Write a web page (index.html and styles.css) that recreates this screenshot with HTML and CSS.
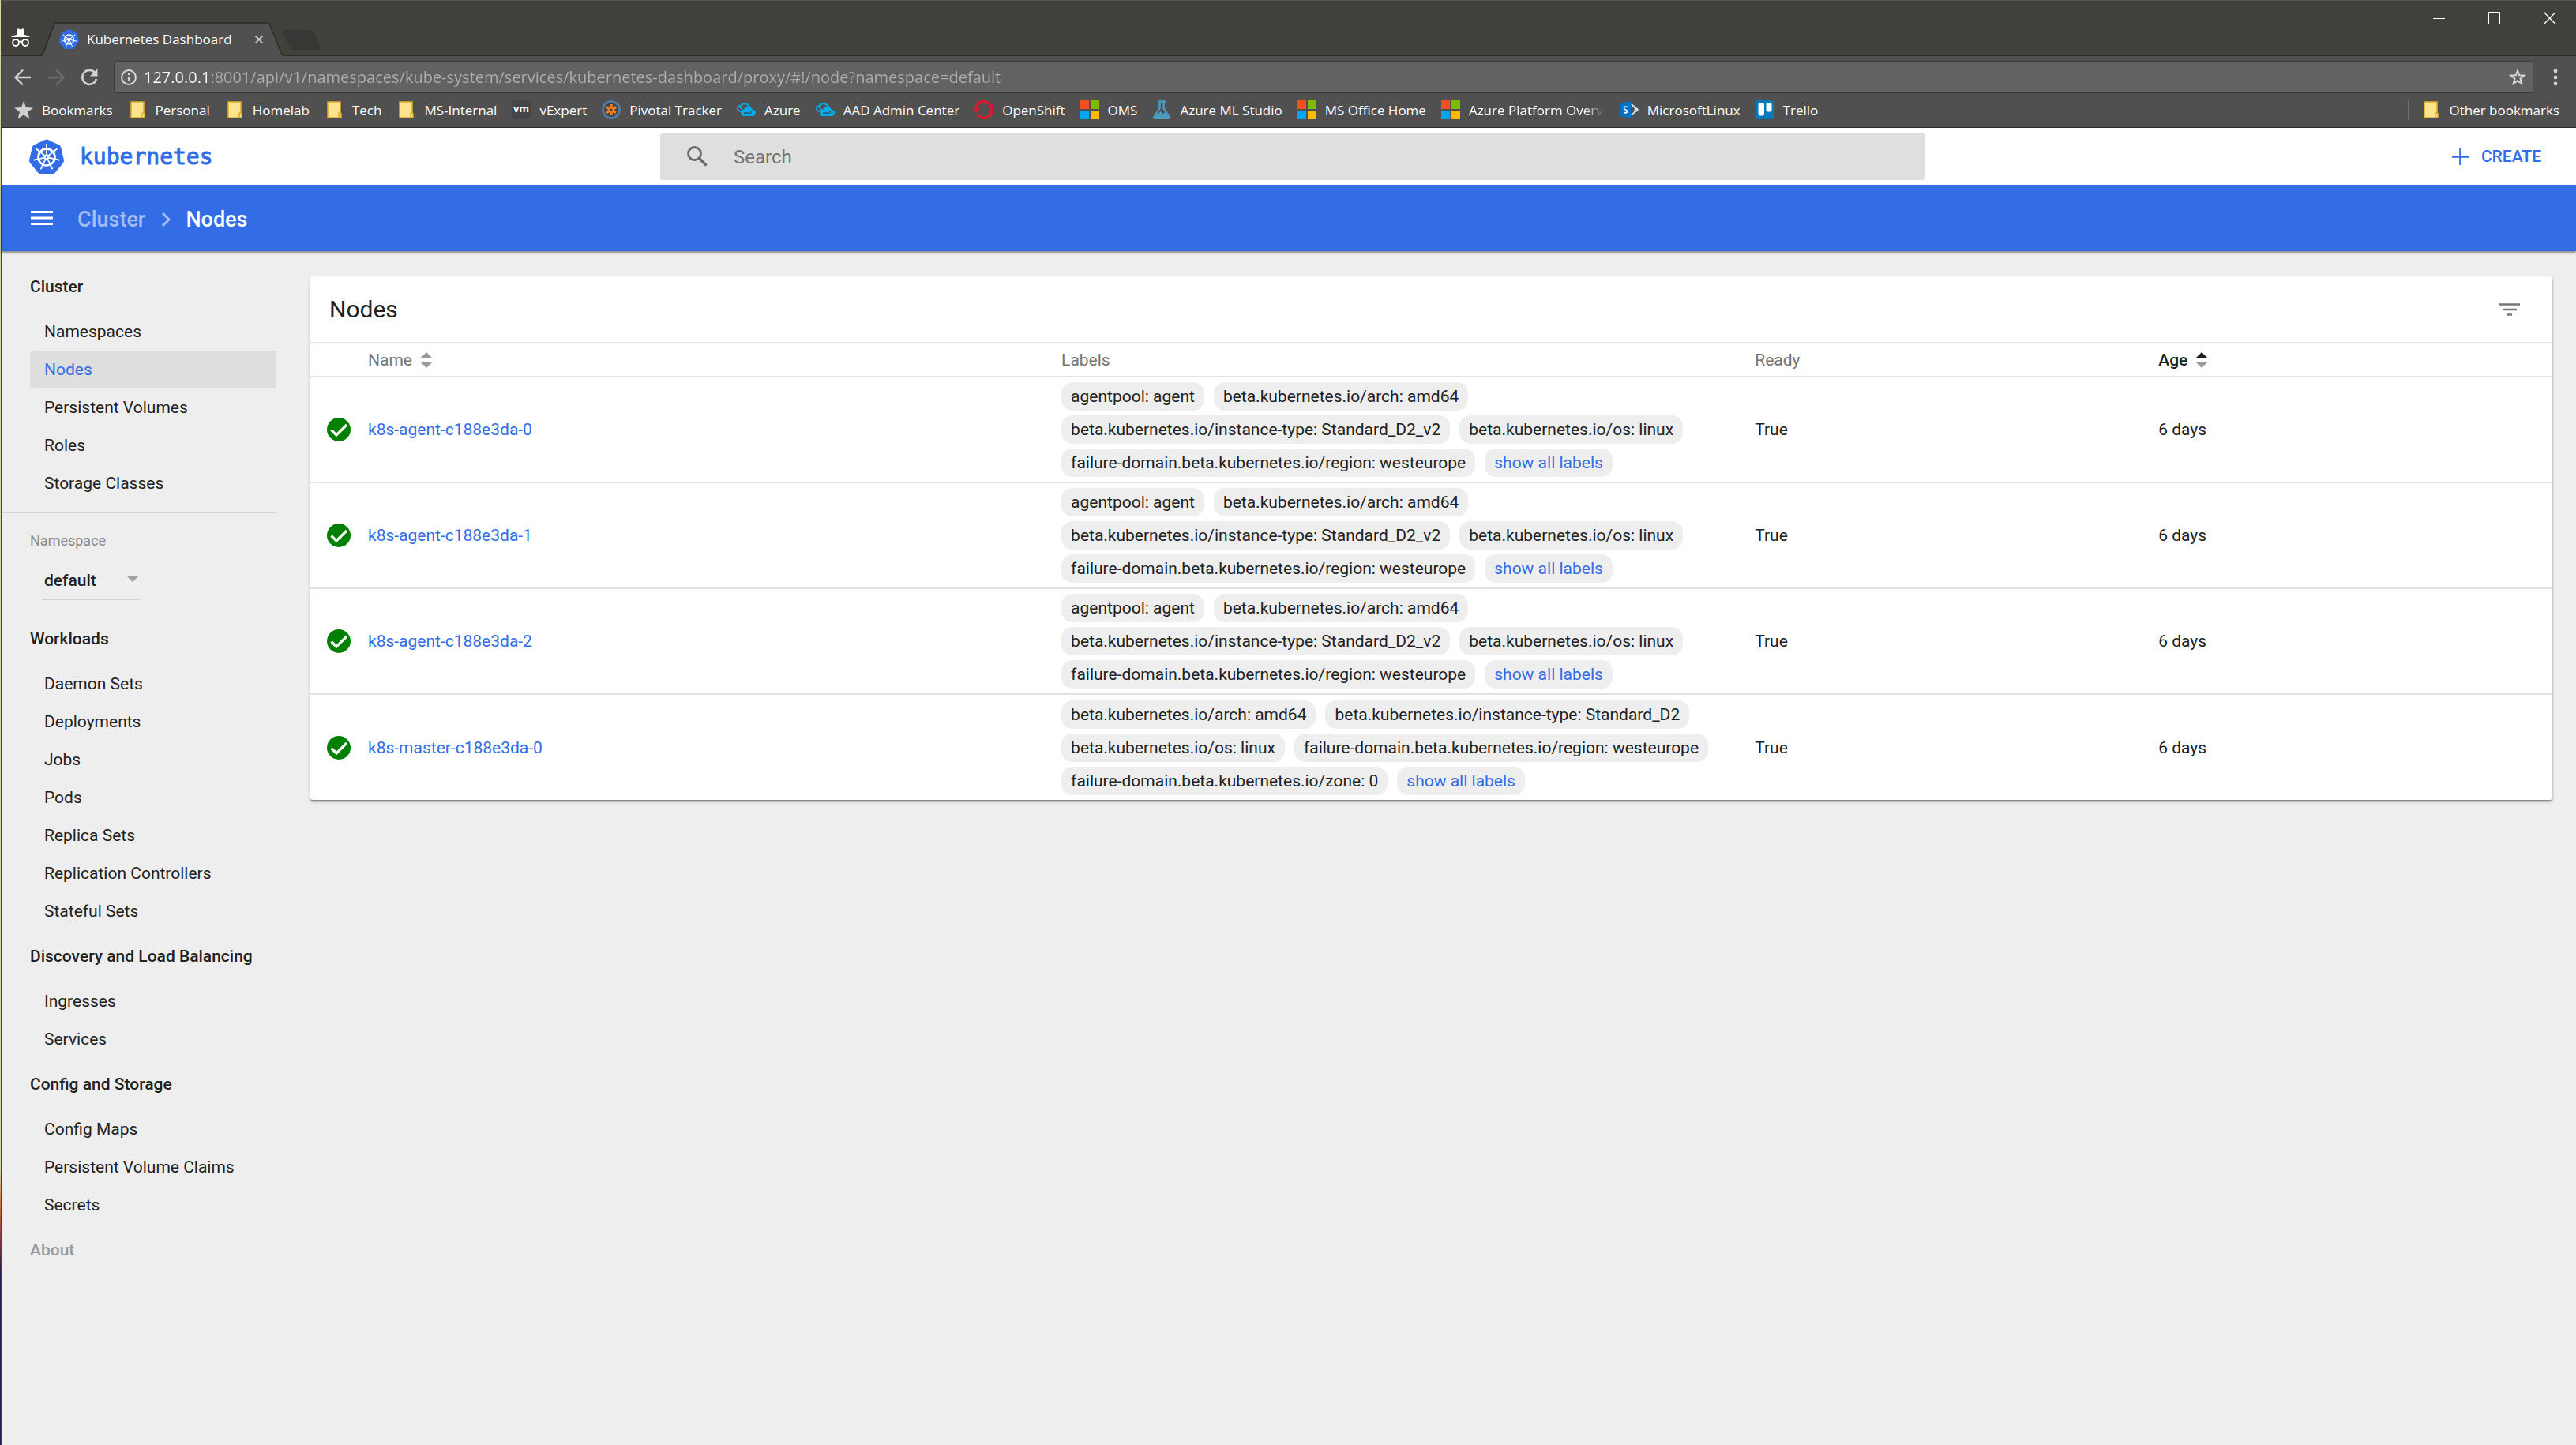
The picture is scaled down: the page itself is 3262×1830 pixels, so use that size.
FILE: index.html
```html
<!DOCTYPE html>
<html lang="en">
<head>
  <meta charset="UTF-8">
  <meta name="viewport" content="width=device-width, initial-scale=1.0">
  <title>Kubernetes Dashboard</title>
  <link rel="stylesheet" href="styles.css">
</head>
<body>
  <!-- Shared icons -->
  <svg class="sprite" aria-hidden="true">
    <symbol id="i-kube" viewBox="0 0 46 46">
      <path class="kube-bg" d="M21 1Q23 0 25 1L40 8Q41.500 9 42 11L46 28Q46 30 45 31.500L34 45Q33 46 31 46H15Q13 46 12 45L1 31.500Q0 30 0 28L4 11Q4.500 9 6 8Z"/>
      <g fill="none" stroke="#fff" stroke-linecap="round">
        <circle cx="23" cy="24" r="11" stroke-width="2.800"/>
        <path d="M23 21V7M25.500 22 36.500 13.300M26 24.800 39.600 27.800M24.500 26.700 30.300 39.300M21.500 26.700 15.700 39.300M20 24.800 6.400 27.800M20.500 22 9.500 13.300" stroke-width="1.900"/>
      </g>
      <circle cx="23" cy="24" r="3.600" fill="#fff"/>
      <circle class="kube-bg" cx="23" cy="24" r="1.300"/>
    </symbol>
    <symbol id="i-folder" viewBox="0 0 24 24">
      <path d="M4 2H20V17H21V22H4Z" fill="#ffe48d" stroke="#dcae2d" stroke-width="1.500"/>
      <path d="M18 22V16H21" fill="none" stroke="#dcae2d" stroke-width="1.500"/>
    </symbol>
    <symbol id="i-cloud" viewBox="0 0 24 24">
      <path d="M5 14A4 4 0 0 1 1 10 4 4 0 0 1 5 7 5.500 5.500 0 0 1 14 6L17 9" fill="none" stroke="#00abec" stroke-width="2"/>
      <path d="M8 20A4 4 0 0 1 5 16 4 4 0 0 1 9 12 6 6 0 0 1 15 8 6 6 0 0 1 20 12 4.300 4.300 0 0 1 24 16 4.300 4.300 0 0 1 20 20Z" fill="#00abec"/>
      <path d="M4 9 12 15H17" fill="none" stroke="#00abec" stroke-width="1.500"/>
      <path d="M9 16H16" stroke="#37474f" stroke-width="1.300"/>
      <circle cx="17" cy="15" r="1.500" fill="none" stroke="#37474f"/>
    </symbol>
    <symbol id="i-ms" viewBox="0 0 24 24">
      <path d="M0 0H11V11H0Z" fill="#f25022"/>
      <path d="M13 0H24V11H13Z" fill="#7fba00"/>
      <path d="M0 13H11V24H0Z" fill="#00a4ef"/>
      <path d="M13 13H24V24H13Z" fill="#ffb900"/>
    </symbol>
    <symbol id="i-check" viewBox="0 0 30 30">
      <circle cx="15" cy="15" r="15" fill="#008000"/>
      <path d="M5.500 15.500 12 22 25 9" fill="none" stroke="#fff" stroke-width="3.200"/>
    </symbol>
  </svg>

  <div class="edge"></div>

  <div class="window">
    <!-- Browser chrome -->
    <div class="tabstrip">
      <svg class="incognito" viewBox="0 0 24 24">
        <path d="M7 8 8.500 0 12 1.500 15.500 0 17 8Z" fill="#fff"/>
        <path d="M0 11Q3 8.500 7 8H17Q21 8.500 24 11Z" fill="#fff"/>
        <circle cx="6" cy="18" r="4" fill="none" stroke="#fff" stroke-width="1.800"/>
        <circle cx="18" cy="18" r="4" fill="none" stroke="#fff" stroke-width="1.800"/>
        <path d="M10 17Q12 16 14 17" fill="none" stroke="#fff" stroke-width="1.800"/>
      </svg>
      <div class="tab">
        <svg class="tab-shape" viewBox="0 0 308 43" preserveAspectRatio="none">
          <path d="M0 43Q2 42 3 39L16 4Q17 1 20 1H286Q289 1 290 4L304 39Q305 42 308 43Z" fill="#505050"/>
          <path d="M0 42Q2 42 3 39L16 4Q17 1 20 1H286Q289 1 290 4L304 39Q305 42 308 42" fill="none" stroke="#2c2b28" stroke-width="1.500"/>
        </svg>
        <svg class="favicon" viewBox="0 0 46 46"><use href="#i-kube"/></svg>
        <span class="tab-title">Kubernetes Dashboard</span>
        <button class="tab-close" aria-label="Close tab">
          <svg width="10" height="10" viewBox="0 0 10 10"><path d="M0 0 10 10M10 0 0 10" stroke="#c8c8c8" stroke-width="1.800"/></svg>
        </button>
      </div>
      <button class="new-tab" aria-label="New tab">
        <svg width="50" height="25" viewBox="0 0 50 25"><path d="M4 0H36Q40 0 41 3L49 22Q50 25 47 25H14Q11 25 10 22L1 3Q0 0 4 0Z" fill="#383735"/></svg>
      </button>
      <div class="window-controls">
        <button aria-label="Minimize"><svg width="16" height="16" viewBox="0 0 16 16"><path d="M0 8.500H15" stroke="#fff"/></svg></button>
        <button aria-label="Maximize"><svg width="16" height="16" viewBox="0 0 16 16"><path d="M.5.5H14.500V15.500H.5Z" fill="none" stroke="#fff"/></svg></button>
        <button aria-label="Close"><svg width="16" height="16" viewBox="0 0 16 16"><path d="M.5.5 15 15.500M15 .5.5 15.500" stroke="#fff" stroke-width="1.300"/></svg></button>
      </div>
    </div>

    <div class="toolbar">
      <button class="tool" aria-label="Back">
        <svg width="22" height="22" viewBox="0 0 22 22"><path d="M21 11H2M11 1.500 1.500 11 11 20.500" fill="none" stroke="#d0d0d0" stroke-width="2.400"/></svg>
      </button>
      <button class="tool" aria-label="Forward" disabled>
        <svg width="22" height="22" viewBox="0 0 22 22"><path d="M1 11H20M11 1.500 20.500 11 11 20.500" fill="none" stroke="#6d6d6d" stroke-width="2.400"/></svg>
      </button>
      <button class="tool" aria-label="Reload">
        <svg width="22" height="22" viewBox="0 0 22 22"><path d="M18.500 5.500A9 9 0 1 0 20 13" fill="none" stroke="#d0d0d0" stroke-width="2.600"/><path d="M21.500 0V9.500H12Z" fill="#d0d0d0"/></svg>
      </button>
      <div class="omnibox">
        <svg width="20" height="20" viewBox="0 0 20 20"><circle cx="10" cy="10" r="8.900" fill="none" stroke="#d8d8d8" stroke-width="2"/><path d="M9 5H11V7H9ZM9 9H11V15H9Z" fill="#d8d8d8"/></svg>
        <input class="url" type="text" aria-label="Address" value="127.0.0.1:8001/api/v1/namespaces/kube-system/services/kubernetes-dashboard/proxy/#!/node?namespace=default">
        <button class="icon-button" aria-label="Bookmark this page">
          <svg width="22" height="22" viewBox="0 0 22 22"><path d="M11 2.500 13.200 8.300 19.500 8.600 14.600 12.500 16.300 18.800 11 15.300 5.700 18.800 7.400 12.500 2.500 8.600 8.800 8.300Z" fill="none" stroke="#d8d8d8" stroke-width="2"/></svg>
        </button>
      </div>
      <button class="menu-button" aria-label="Menu">
        <svg width="6" height="22" viewBox="0 0 6 22"><g fill="#d0d0d0"><circle cx="3" cy="3" r="2.400"/><circle cx="3" cy="11" r="2.400"/><circle cx="3" cy="19" r="2.400"/></g></svg>
      </button>
    </div>

    <nav class="bookmarks">
      <a href="#"><svg viewBox="0 0 24 24"><path d="M12 1 15 9 24 9.500 17 15 19.500 23.500 12 18.500 4.500 23.500 7 15 0 9.500 9 9Z" fill="#d0d0d0"/></svg><span>Bookmarks</span></a>
      <a href="#"><svg viewBox="0 0 24 24"><use href="#i-folder"/></svg><span>Personal</span></a>
      <a href="#"><svg viewBox="0 0 24 24"><use href="#i-folder"/></svg><span>Homelab</span></a>
      <a href="#"><svg viewBox="0 0 24 24"><use href="#i-folder"/></svg><span>Tech</span></a>
      <a href="#"><svg viewBox="0 0 24 24"><use href="#i-folder"/></svg><span>MS-Internal</span></a>
      <a href="#"><svg viewBox="0 0 24 24"><rect width="24" height="24" rx="4" fill="#46464a"/><text class="vm-text" x="12" y="15" text-anchor="middle">vm</text></svg><span>vExpert</span></a>
      <a href="#"><svg viewBox="0 0 24 24"><circle cx="12" cy="12" r="10.500" fill="#3f4347" stroke="#517ba3" stroke-width="3"/><path d="M12 5V19M5.900 8.500 18.100 15.500M5.900 15.500 18.100 8.500" stroke="#f08122" stroke-width="3.500"/><circle cx="12" cy="12" r="1.500" fill="#3f4347"/></svg><span>Pivotal Tracker</span></a>
      <a href="#"><svg viewBox="0 0 24 24"><use href="#i-cloud"/></svg><span>Azure</span></a>
      <a href="#"><svg viewBox="0 0 24 24"><use href="#i-cloud"/></svg><span>AAD Admin Center</span></a>
      <a href="#"><svg viewBox="0 0 24 24"><path d="M3 15A9.500 9.500 0 0 1 19 5M21 9A9.500 9.500 0 0 1 5 19" fill="none" stroke="#e0182d" stroke-width="3.500"/><path d="M0 12 6 9.500V12L0 14.500ZM17 7 23 4.500V7L17 9.500Z" fill="#e0182d"/></svg><span>OpenShift</span></a>
      <a href="#"><svg viewBox="0 0 24 24"><use href="#i-ms"/></svg><span>OMS</span></a>
      <a href="#"><svg viewBox="0 0 24 24"><path d="M7 1.500H17M9.500 1V10L2.500 21Q2 23 4 23H20Q22 23 21.500 21L14.500 10V1" fill="none" stroke="#4c9abf" stroke-width="2.400"/><path d="M6 18 11 14 13 17 18 15 21 22H3Z" fill="#4c9abf"/></svg><span>Azure ML Studio</span></a>
      <a href="#"><svg viewBox="0 0 24 24"><use href="#i-ms"/></svg><span>MS Office Home</span></a>
      <a href="#"><svg viewBox="0 0 24 24"><use href="#i-ms"/></svg><span class="fade">Azure Platform Overv</span></a>
      <a href="#"><svg viewBox="0 0 24 24"><path d="M1 4 14 1V23L1 20Z" fill="#0072c6"/><path d="M15 5 22 12 15 19" fill="none" stroke="#cfe6f7" stroke-width="2"/><circle cx="21" cy="12" r="2.500" fill="#cfe6f7"/><path d="M10 8.500Q5.500 7.500 5.500 10 5.500 11.500 7.500 12 9.500 12.500 9.500 14 9.500 16.500 5 15.500" fill="none" stroke="#fff" stroke-width="1.700"/></svg><span>MicrosoftLinux</span></a>
      <a href="#"><svg viewBox="0 0 24 24"><rect width="24" height="24" rx="4" fill="#0079bf"/><rect x="3.500" y="3.500" width="7.500" height="16" rx="2" fill="#fff"/><rect x="13.500" y="3.500" width="7" height="11" rx="2" fill="#fff"/></svg><span>Trello</span></a>
      <a href="#" class="other"><svg viewBox="0 0 24 24"><use href="#i-folder"/></svg><span>Other bookmarks</span></a>
    </nav>

    <!-- Dashboard -->
    <header class="header">
      <a class="brand" href="#">
        <svg class="logo" viewBox="0 0 46 46"><use href="#i-kube"/></svg>
        <span>kubernetes</span>
      </a>
      <label class="search">
        <svg width="26" height="26" viewBox="0 0 26 26"><circle cx="9.500" cy="9.500" r="8" fill="none" stroke="#686868" stroke-width="2.800"/><path d="M15 15 24.500 24.500" stroke="#686868" stroke-width="3.400"/></svg>
        <input type="text" placeholder="Search" aria-label="Search">
      </label>
      <button class="create">
        <svg width="21" height="21" viewBox="0 0 21 21"><path d="M10.500 0V21M0 10.500H21" stroke="#326de6" stroke-width="2.600"/></svg>
        CREATE
      </button>
    </header>

    <div class="actionbar">
      <button class="icon-button" aria-label="Toggle navigation">
        <svg width="28" height="18" viewBox="0 0 28 18"><path d="M0 1.500H28M0 9H28M0 16.500H28" stroke="#fff" stroke-width="3"/></svg>
      </button>
      <div class="breadcrumbs">
        <a class="crumb" href="#">Cluster</a>
        <svg width="12" height="18" viewBox="0 0 12 18"><path d="M2 1 10 9 2 17" fill="none" stroke="#a9c1f5" stroke-width="2.800"/></svg>
        <span class="crumb current">Nodes</span>
      </div>
    </div>

    <div class="content">
      <nav class="sidebar">
        <a class="heading" href="#">Cluster</a>
        <a class="item" href="#">Namespaces</a>
        <a class="item active" href="#">Nodes</a>
        <a class="item" href="#">Persistent Volumes</a>
        <a class="item" href="#">Roles</a>
        <a class="item" href="#">Storage Classes</a>
        <hr>
        <div class="namespace">
          <label for="namespace">Namespace</label>
          <div class="select">
            <select id="namespace"><option>default</option></select>
            <svg width="14" height="7" viewBox="0 0 14 7"><path d="M0 0H14L7 7Z" fill="#a2a2a2"/></svg>
          </div>
        </div>
        <a class="heading" href="#">Workloads</a>
        <a class="item" href="#">Daemon Sets</a>
        <a class="item" href="#">Deployments</a>
        <a class="item" href="#">Jobs</a>
        <a class="item" href="#">Pods</a>
        <a class="item" href="#">Replica Sets</a>
        <a class="item" href="#">Replication Controllers</a>
        <a class="item" href="#">Stateful Sets</a>
        <a class="heading" href="#">Discovery and Load Balancing</a>
        <a class="item" href="#">Ingresses</a>
        <a class="item" href="#">Services</a>
        <a class="heading" href="#">Config and Storage</a>
        <a class="item" href="#">Config Maps</a>
        <a class="item" href="#">Persistent Volume Claims</a>
        <a class="item" href="#">Secrets</a>
        <a class="heading about" href="#">About</a>
      </nav>

      <main class="card">
        <div class="card-title">
          <h2>Nodes</h2>
          <button class="icon-button" aria-label="Filter">
            <svg width="26" height="16" viewBox="0 0 26 16"><path d="M0 1.500H26M4 8H22M10 14.500H16" stroke="#757575" stroke-width="2.600"/></svg>
          </button>
        </div>
        <table class="nodes">
          <colgroup>
            <col class="col-status"><col class="col-name"><col class="col-labels"><col class="col-ready"><col>
          </colgroup>
          <thead>
            <tr>
              <th></th>
              <th><button class="sort">Name <svg width="14" height="20" viewBox="0 0 14 20"><path d="M7 0 14 7H0Z"/><path class="down" d="M0 13H14L7 20Z"/></svg></button></th>
              <th>Labels</th>
              <th>Ready</th>
              <th><button class="sort sorted">Age <svg width="14" height="20" viewBox="0 0 14 20"><path d="M7 0 14 7H0Z"/><path class="down" d="M0 13H14L7 20Z"/></svg></button></th>
            </tr>
          </thead>
          <tbody>
            <tr>
              <td class="status"><svg width="30" height="30"><use href="#i-check"/></svg></td>
              <td><a href="#">k8s-agent-c188e3da-0</a></td>
              <td>
                <div class="chips">
                  <span>agentpool: agent</span>
                  <span>beta.kubernetes.io/arch: amd64</span>
                  <span>beta.kubernetes.io/instance-type: Standard_D2_v2</span>
                  <span>beta.kubernetes.io/os: linux</span>
                  <span>failure-domain.beta.kubernetes.io/region: westeurope</span>
                  <a href="#">show all labels</a>
                </div>
              </td>
              <td>True</td>
              <td>6 days</td>
            </tr>
            <tr>
              <td class="status"><svg width="30" height="30"><use href="#i-check"/></svg></td>
              <td><a href="#">k8s-agent-c188e3da-1</a></td>
              <td>
                <div class="chips">
                  <span>agentpool: agent</span>
                  <span>beta.kubernetes.io/arch: amd64</span>
                  <span>beta.kubernetes.io/instance-type: Standard_D2_v2</span>
                  <span>beta.kubernetes.io/os: linux</span>
                  <span>failure-domain.beta.kubernetes.io/region: westeurope</span>
                  <a href="#">show all labels</a>
                </div>
              </td>
              <td>True</td>
              <td>6 days</td>
            </tr>
            <tr>
              <td class="status"><svg width="30" height="30"><use href="#i-check"/></svg></td>
              <td><a href="#">k8s-agent-c188e3da-2</a></td>
              <td>
                <div class="chips">
                  <span>agentpool: agent</span>
                  <span>beta.kubernetes.io/arch: amd64</span>
                  <span>beta.kubernetes.io/instance-type: Standard_D2_v2</span>
                  <span>beta.kubernetes.io/os: linux</span>
                  <span>failure-domain.beta.kubernetes.io/region: westeurope</span>
                  <a href="#">show all labels</a>
                </div>
              </td>
              <td>True</td>
              <td>6 days</td>
            </tr>
            <tr>
              <td class="status"><svg width="30" height="30"><use href="#i-check"/></svg></td>
              <td><a href="#">k8s-master-c188e3da-0</a></td>
              <td>
                <div class="chips">
                  <span>beta.kubernetes.io/arch: amd64</span>
                  <span>beta.kubernetes.io/instance-type: Standard_D2</span>
                  <span>beta.kubernetes.io/os: linux</span>
                  <span>failure-domain.beta.kubernetes.io/region: westeurope</span>
                  <span>failure-domain.beta.kubernetes.io/zone: 0</span>
                  <a href="#">show all labels</a>
                </div>
              </td>
              <td>True</td>
              <td>6 days</td>
            </tr>
          </tbody>
        </table>
      </main>
    </div>
  </div>
</body>
</html>
```

FILE: styles.css
```css
* {
  box-sizing: border-box;
}
body {
  margin: 0;
  min-height: 100vh;
  display: flex;
  background: #eee;
  font-family: Roboto, sans-serif;
  font-size: 21px;
  color: #212121;
}
a {
  color: inherit;
  text-decoration: none;
}
button {
  background: none;
  border: none;
  padding: 0;
  font: inherit;
  color: inherit;
}
svg {
  display: block;
  flex: none;
}
.sprite {
  position: absolute;
  width: 0;
  height: 0;
}
.kube-bg {
  fill: #326de6;
}
/* Desktop showing at the left of the window */
.edge {
  width: 2px;
  flex: none;
  border-right: 1px solid #45443e;
  background: linear-gradient(#d9d2a4 0, #d9d2a4 81%, #c0593a 84%, #2c1846 88%, #2c1846 100%);
}
.window {
  flex: 1;
  min-width: 0;
}
/* Browser chrome */
.tabstrip,
.toolbar,
.bookmarks {
  display: flex;
  font-family: "Open Sans", "Noto Sans", sans-serif;
  font-size: 17px;
  color: #fff;
}
.tabstrip {
  height: 71px;
  background: #42403b;
  border-top: 1px solid #565550;
  border-bottom: 1px solid #2c2b28;
  align-items: flex-end;
}
.incognito {
  width: 24px;
  height: 24px;
  margin: 0 14px 10px 12px;
}
.tab {
  position: relative;
  width: 308px;
  height: 43px;
  padding: 0 27px 0 23px;
  margin-bottom: -1px;
  display: flex;
  align-items: center;
}
.tab-shape {
  position: absolute;
  left: 0;
  top: 0;
  width: 100%;
  height: 100%;
}
.favicon {
  position: relative;
  width: 25px;
  height: 25px;
}
.favicon .kube-bg {
  stroke: #fff;
}
.tab-title {
  position: relative;
  flex: 1;
  padding-left: 10px;
  white-space: nowrap;
}
.tab-close {
  position: relative;
}
.new-tab {
  margin: 0 0 7px -3px;
}
.window-controls {
  margin-left: auto;
  align-self: flex-start;
  padding: 14px 25px 0 0;
  display: flex;
  gap: 54px;
}
.toolbar {
  height: 49px;
  padding: 6px 23px 2px 16px;
  background: #505050;
  align-items: center;
}
.tool {
  width: 42px;
}
.omnibox {
  flex: 1;
  height: 41px;
  margin-right: 25px;
  padding: 0 8px;
  display: flex;
  align-items: center;
  gap: 9px;
  background: #626262;
  border: 1px solid #393939;
  border-radius: 3px;
}
.url {
  flex: 1;
  border: none;
  outline: none;
  padding: 0;
  font: inherit;
  font-size: 20px;
  color: transparent;
  /* host in white, path in grey */
  background: linear-gradient(90deg, #fff 85px, #adadad 85px);
  -webkit-background-clip: text;
  background-clip: text;
}
.bookmarks {
  height: 42px;
  padding: 0 21px 3px 16px;
  background: #505050;
  border-bottom: 1px solid #2b2829;
  align-items: center;
  gap: 19px;
}
.bookmarks a {
  display: flex;
  align-items: center;
  gap: 11px;
  white-space: nowrap;
}
.bookmarks svg {
  width: 24px;
  height: 24px;
}
.vm-text {
  font: bold 13px "Open Sans", sans-serif;
  fill: #fff;
}
.bookmarks .fade {
  padding-right: 2px;
  -webkit-mask-image: linear-gradient(90deg, #000 85%, transparent);
  mask-image: linear-gradient(90deg, #000 85%, transparent);
}
.bookmarks .other {
  margin-left: auto;
  padding-left: 16px;
  border-left: 1px solid #737373;
}
/* Dashboard header */
.header {
  height: 72px;
  display: grid;
  grid-template-columns: 834fr 1602fr 824fr;
  align-items: center;
  background: #fff;
}
.brand {
  display: flex;
  align-items: center;
  gap: 20px;
  padding-left: 35px;
  font-family: "DejaVu Sans Mono", monospace;
  font-size: 28px;
  color: #326de6;
  -webkit-text-stroke: 1px #326de6;
}
.logo {
  width: 44px;
  height: 44px;
}
.search {
  height: 59px;
  padding: 0 34px;
  display: flex;
  align-items: center;
  gap: 33px;
  background: #dfdfdf;
  border-radius: 3px;
}
.search input {
  flex: 1;
  border: none;
  outline: none;
  padding: 2px 0 0;
  background: none;
  font: inherit;
  font-size: 24px;
}
.search input::placeholder {
  color: #757575;
}
.create {
  justify-self: end;
  margin-right: 44px;
  display: flex;
  align-items: center;
  gap: 16px;
  font-weight: 500;
  color: #326de6;
}
.actionbar {
  position: relative;
  height: 84px;
  padding: 0 37px;
  display: flex;
  align-items: center;
  background: #326de6;
  box-shadow: 0 2px 3px rgba(0, 0, 0, 0.45);
  font-size: 27px;
  font-weight: 500;
  color: #fff;
}
.breadcrumbs {
  display: flex;
  align-items: center;
  padding-top: 4px;
}
.crumb {
  margin: 0 20px 0 31px;
  color: #a3bdf4;
}
.current {
  margin: 0 0 0 19px;
  color: #fff;
}
.content {
  display: flex;
  align-items: flex-start;
  gap: 43px;
  padding: 0 30px 30px 0;
}
/* Sidebar */
.sidebar {
  width: 348px;
  flex: none;
  padding-top: 12px;
}
.sidebar a {
  display: flex;
  align-items: center;
}
.heading {
  height: 66px;
  margin-left: 36px;
  font-weight: 500;
}
.item {
  height: 48px;
  margin-left: 36px;
  padding-left: 18px;
  border-radius: 3px;
}
.active {
  background: #dedede;
  color: #326de6;
}
.about {
  color: #9a9a9a;
}
.sidebar hr {
  margin: 12px 0;
  border: none;
  border-top: 2px solid #d4d4d4;
}
.namespace {
  padding: 0 0 16px 36px;
}
.namespace label {
  display: block;
  line-height: 46px;
  font-size: 18px;
  color: #8a8a8a;
}
.select {
  width: 124px;
  height: 52px;
  margin-left: 15px;
  padding: 0 2px 0 3px;
  display: flex;
  align-items: center;
  border-bottom: 2px solid #d0d0d0;
}
.select select {
  flex: 1;
  appearance: none;
  border: none;
  outline: none;
  padding: 4px 0 0;
  background: none;
  font: inherit;
  font-weight: 500;
  color: inherit;
}
/* Node list */
.card {
  flex: 1;
  min-width: 0;
  margin-top: 32px;
  background: #fff;
  border-radius: 3px;
  box-shadow: 0 2px 4px rgba(0, 0, 0, 0.2), 0 2px 2px rgba(0, 0, 0, 0.24), 0 3px 2px -1px rgba(0, 0, 0, 0.12);
}
.card-title {
  height: 83px;
  padding: 0 41px 0 24px;
  display: flex;
  align-items: center;
  justify-content: space-between;
}
.card-title h2 {
  margin: 0;
  font-size: 30px;
  font-weight: 400;
}
.nodes {
  width: 100%;
  table-layout: fixed;
  border-collapse: collapse;
}
.col-status {
  width: 73px;
}
.col-name,
.col-labels {
  width: 30.93%;
}
.col-ready {
  width: 18%;
}
.nodes th,
.nodes td {
  padding: 0;
  border-top: 2px solid #e2e2e2;
  text-align: left;
}
.nodes th {
  height: 43px;
  font-weight: 400;
  color: #757575;
}
.nodes td {
  height: 134px;
}
.nodes a {
  color: #326de6;
}
.status svg {
  margin-left: 21px;
}
.sort {
  display: flex;
  align-items: center;
  gap: 11px;
}
.sort svg {
  fill: #999;
}
.sorted {
  font-weight: 500;
  color: #212121;
}
.sorted svg {
  fill: #212121;
}
.sorted .down {
  fill: #999;
}
.chips {
  display: flex;
  flex-wrap: wrap;
  gap: 6px 12px;
}
.chips > * {
  padding: 0 12px;
  line-height: 36px;
  background: #eee;
  border-radius: 14px;
}
```
